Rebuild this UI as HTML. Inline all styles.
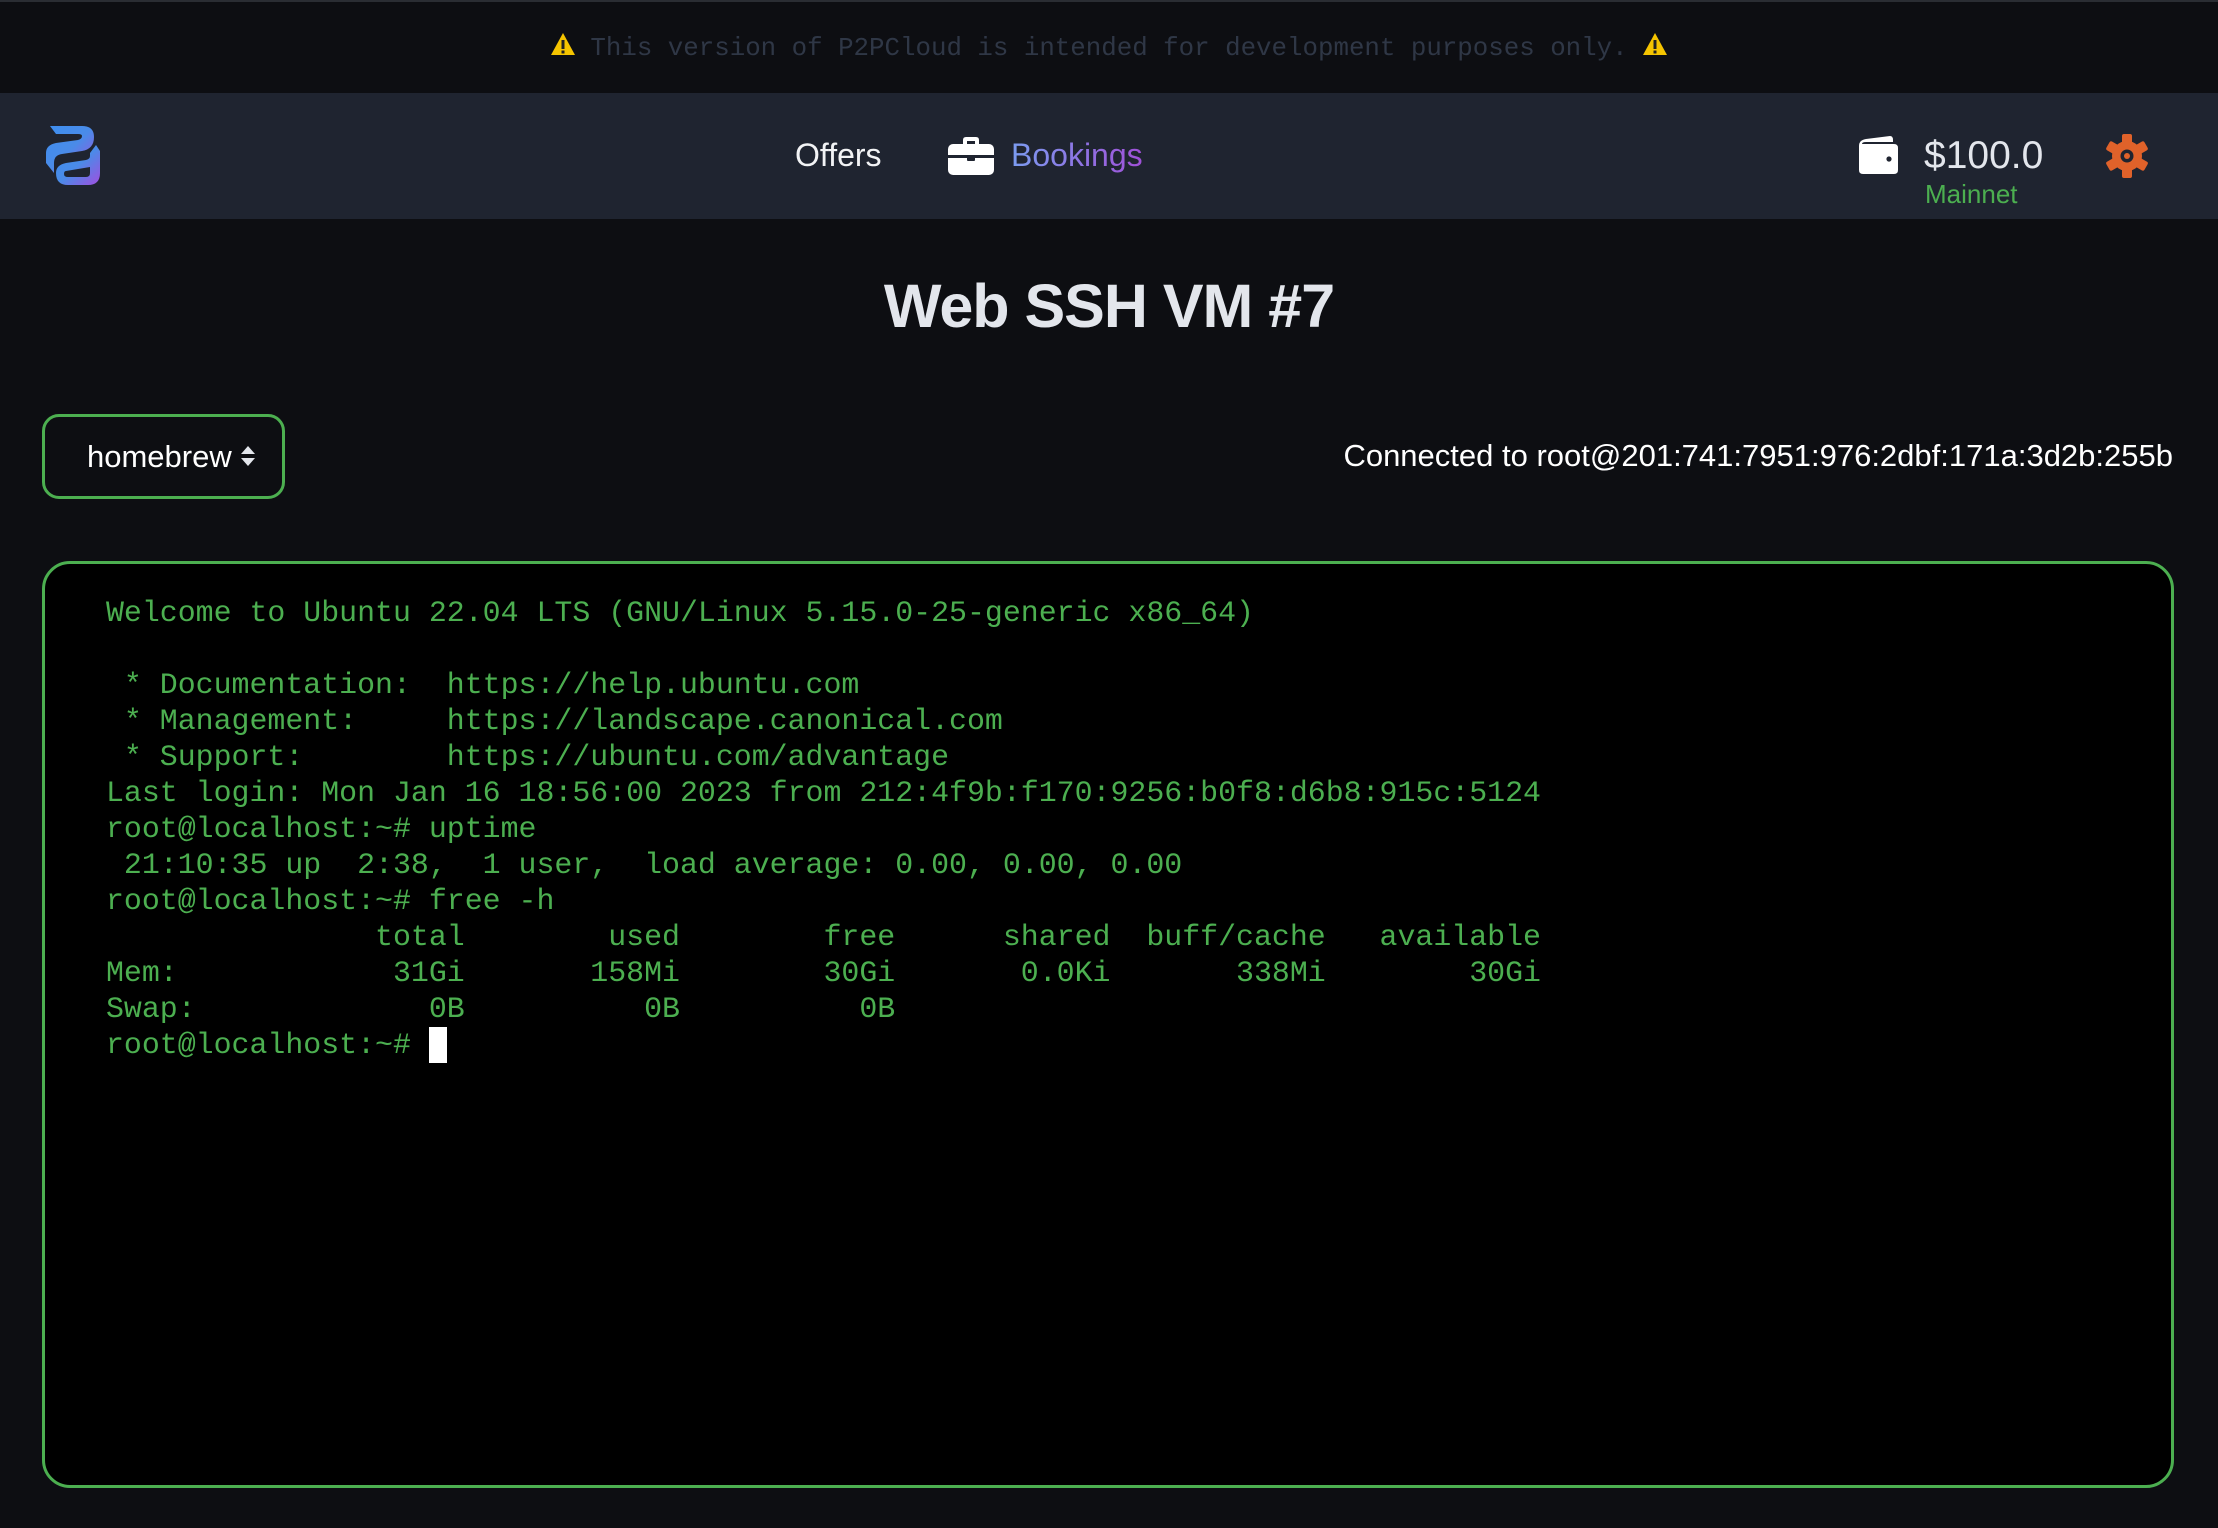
<!DOCTYPE html>
<html><head><meta charset="utf-8"><style>
*{margin:0;padding:0;box-sizing:border-box}
body{width:2218px;height:1528px;background:#0d0e12;font-family:"Liberation Sans",sans-serif;overflow:hidden;position:relative}
.banner{position:absolute;top:0;left:0;width:2218px;height:93px;background:#0d0e12;border-top:2px solid #2a2d33;text-align:center;line-height:93px;font-family:"Liberation Mono",monospace;font-size:25.8px;color:#2f3746}
.warn{display:inline-block;vertical-align:middle;margin:0 14px;position:relative;top:-4px}
.nav{position:absolute;top:93px;left:0;width:2218px;height:126px;background:#1f2430}
.abs{position:absolute;white-space:nowrap}
.title{position:absolute;top:271px;width:2218px;text-align:center;font-size:61px;font-weight:bold;color:#e3e6ec;letter-spacing:-1px}
.sel{position:absolute;left:42px;top:414px;width:243px;height:85px;border:3px solid #4caf50;border-radius:17px;color:#fff;font-size:31px;line-height:79px;padding-left:42px}
.term{position:absolute;left:42px;top:561px;width:2132px;height:927px;border:3px solid #4caf50;border-radius:28px;background:#000}
pre{position:absolute;left:106px;top:595px;font-family:"Liberation Mono",monospace;font-size:29.9px;line-height:36px;color:#4caf50}
.cur{display:inline-block;width:18px;height:36px;background:#fff;vertical-align:top}
</style></head><body>
<div class="banner"><svg class="warn" width="26" height="24" viewBox="0 0 26 24"><path d="M13 1L25 23H1Z" fill="#f5c400"/><rect x="11.5" y="8" width="3" height="9" fill="#222"/><rect x="11.5" y="18.5" width="3" height="3" fill="#222"/></svg>This version of P2PCloud is intended for development purposes only.<svg class="warn" width="26" height="24" viewBox="0 0 26 24"><path d="M13 1L25 23H1Z" fill="#f5c400"/><rect x="11.5" y="8" width="3" height="9" fill="#222"/><rect x="11.5" y="18.5" width="3" height="3" fill="#222"/></svg></div>
<div class="nav">
<svg class="abs" style="left:42px;top:30px" width="66" height="66" viewBox="0 0 66 66"><defs><linearGradient id="g" x1="0" y1="0" x2="1" y2="1"><stop offset="0" stop-color="#3d8ff0"/><stop offset="0.5" stop-color="#4a8be8"/><stop offset="1" stop-color="#a04fe0"/></linearGradient></defs>
<path d="M8 3H40Q52 3 52 14Q52 26 40 28L20 31Q12 32 12 40V50L4 40V30Q4 22 14 20L36 17Q40 16 40 13Q40 11 36 11H14Z" fill="url(#g)"/>
<path d="M58 28V50Q58 62 46 62H26Q14 62 14 50Q14 42 24 40L44 37Q48 36 48 33V30L54 22Z M24 48Q22 48 22 51Q22 54 26 54H44Q48 54 48 50V44Z" fill="url(#g)" fill-rule="evenodd"/></svg>
<div class="abs" style="left:795px;top:40px;font-size:32px;color:#f2f3f5;line-height:44px">Offers</div>
<svg class="abs" style="left:947px;top:43px" width="48" height="40" viewBox="0 0 48 40"><path d="M16 8V4Q16 1 19 1H29Q32 1 32 4V8H28V5H20V8Z" fill="#fff"/><rect x="1" y="8" width="46" height="31" rx="5" fill="#fff"/><rect x="1" y="19" width="46" height="3" fill="#1f2430"/><rect x="20" y="19" width="8" height="6" rx="1" fill="#1f2430"/></svg>
<div class="abs" style="left:1011px;top:40px;font-size:32px;line-height:44px;background:linear-gradient(90deg,#7b9cf0,#a050d8);-webkit-background-clip:text;color:transparent">Bookings</div>
<svg class="abs" style="left:1856px;top:43px" width="44" height="40" viewBox="0 0 44 40"><path d="M3 10Q3 4 10 3L34 0Q37 0 37 4V6H10Q6 6 6 8H38Q42 8 42 12V34Q42 38 38 38H7Q3 38 3 34Z" fill="#fff"/><circle cx="33" cy="23" r="2.6" fill="#1f2430"/></svg>
<div class="abs" style="left:1924px;top:38px;font-size:39px;color:#e3e6ec;line-height:50px">$100.0</div>
<div class="abs" style="left:1925px;top:85px;font-size:26px;color:#4caf50;line-height:32px">Mainnet</div>
<svg class="abs" style="left:2105px;top:41px" width="44" height="44" viewBox="-22 -22 44 44"><g fill="#e0622a"><circle r="15"/><rect x="-5" y="-22" width="10" height="44" rx="2"/><rect x="-5" y="-22" width="10" height="44" rx="2" transform="rotate(60)"/><rect x="-5" y="-22" width="10" height="44" rx="2" transform="rotate(120)"/></g><circle r="6.5" fill="#1f2430"/><circle r="3" fill="#e0622a"/></svg>
</div>
<div class="title">Web SSH VM #7</div>
<div class="sel">homebrew <svg width="16" height="24" viewBox="0 0 16 24" style="vertical-align:middle;position:relative;top:-3px"><path d="M8 2L15 10H1Z M8 22L15 14H1Z" fill="#e3e6ec"/></svg></div>
<div class="abs" style="right:45px;top:436px;font-size:31px;color:#fff;line-height:40px">Connected to root@201:741:7951:976:2dbf:171a:3d2b:255b</div>
<div class="term"></div>
<pre>Welcome to Ubuntu 22.04 LTS (GNU/Linux 5.15.0-25-generic x86_64)

 * Documentation:  https://help.ubuntu.com
 * Management:     https://landscape.canonical.com
 * Support:        https://ubuntu.com/advantage
Last login: Mon Jan 16 18:56:00 2023 from 212:4f9b:f170:9256:b0f8:d6b8:915c:5124
root@localhost:~# uptime
 21:10:35 up  2:38,  1 user,  load average: 0.00, 0.00, 0.00
root@localhost:~# free -h
               total        used        free      shared  buff/cache   available
Mem:            31Gi       158Mi        30Gi       0.0Ki       338Mi        30Gi
Swap:             0B          0B          0B
root@localhost:~# <span class="cur"></span></pre>
</body></html>
